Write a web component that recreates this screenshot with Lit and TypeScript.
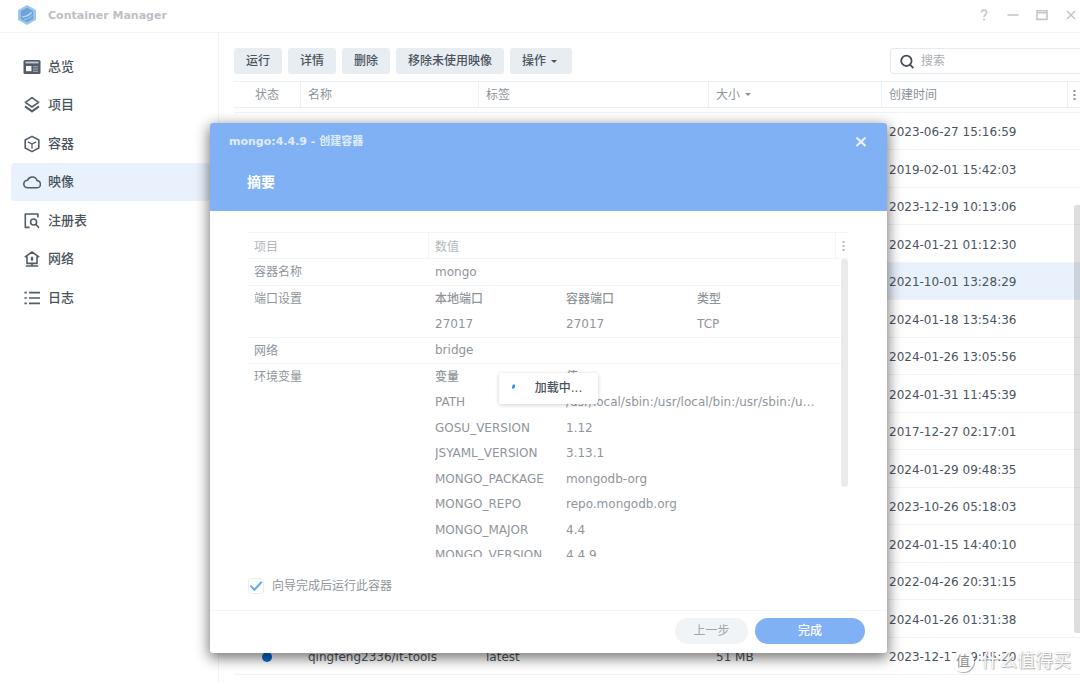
import { LitElement, html, css, svg, nothing } from "lit";
import { customElement, property, state } from "lit/decorators.js";
import { classMap } from "lit/directives/class-map.js";

const base = css`
  *, *::before, *::after { box-sizing: border-box; }
  button, input {
    font: inherit;
    color: inherit;
    margin: 0;
    padding: 0;
    border: 0;
    background: none;
  }
  svg { display: block; flex: none; }
  table { border-collapse: separate; border-spacing: 0; table-layout: fixed; width: 100%; }
  th, td { padding: 0; text-align: left; font-weight: 400; }
`;

const icons: Record<string, unknown> = {
  overview: svg`<rect x="0.5" y="2" width="17" height="14" rx="1.5" fill="#525d68"/>
    <rect x="2.5" y="3.6" width="13" height="1.8" fill="#c9ced3"/>
    <rect x="3" y="8" width="5.4" height="5.2" fill="#fff"/>
    <path d="M10 8.8h5M10 11h5M10 13.2h5" stroke="#aab1b8" stroke-width="1.1"/>`,
  project: svg`<path d="M9 1.6 15.6 6.3 9 11 2.4 6.3Z"/><path d="m2 10.400 7 5 7-5" stroke-width="2"/>`,
  container: svg`<path d="M9 1.4 15.8 5v8L9 16.6 2.2 13V5Z"/><path d="M4.8 6.8 9 9l4.2-2.2M9 9v4.8" stroke-width="1.3"/>`,
  image: svg`<path d="M4.600 14.800h9a3.600 3.600 0 0 0 .5-7.200A5 5 0 0 0 4.600 7.200a3.800 3.800 0 0 0 0 7.600Z"/>`,
  registry: svg`<path d="M6.6 15.4H2.3V2h12.6v3.6"/><circle cx="10.6" cy="10" r="3"/><path d="m12.8 12.4 3.2 3.4"/>`,
  network: svg`<path d="M1.8 7.2 9 2l7.2 5.2M4 6.4v7h10v-7M9 13.4v2.4M2.8 16h12.4"/><path d="M9 6.8v4M7.8 8.8h2.4" stroke-width="1.8"/>`,
  log: svg`<path d="M6 3.6h11M6 9h11M6 14.4h11M1.4 3.6h2.4M1.4 9h2.4M1.4 14.4h2.4" stroke-width="1.7"/>`,
};

@customElement("app-sidebar")
class AppSidebar extends LitElement {
  @state() active = "image";
  items = [
    ["overview", "总览"],
    ["project", "项目"],
    ["container", "容器"],
    ["image", "映像"],
    ["registry", "注册表"],
    ["network", "网络"],
    ["log", "日志"],
  ];
  static styles = [base, css`
    :host { display: block; padding: 15px 8px 0 11px; border-right: 1px solid #eef3f7; }
    .item {
      display: flex;
      align-items: center;
      gap: 7px;
      height: 38px;
      padding: 0 12px;
      border-radius: 4px;
      font-size: 13px;
      font-weight: 500;
      color: #4a545e;
      text-decoration: none;
    }
    .item:nth-child(even) { margin-bottom: 1px; }
    .item.active { background: #e9f1fd; }
    svg { fill: none; stroke: #525d68; stroke-width: 1.6; stroke-linejoin: round; }
    .overview svg { stroke: none; }
  `];
  render() {
    return html`<nav>${this.items.map(([id, label]) => html`
      <a href="#${id}" class=${classMap({ item: true, active: id === this.active, [id]: true })}
        @click=${() => (this.active = id)}>
        <svg width="18" height="18" viewBox="0 0 18 18">${icons[id]}</svg>${label}
      </a>`)}</nav>`;
  }
}

interface ImageRow { date: string; name?: string; tag?: string; size?: string; selected?: boolean; }

const rows: ImageRow[] = [
  { date: "2023-06-27 15:16:59" },
  { date: "2019-02-01 15:42:03" },
  { date: "2023-12-19 10:13:06" },
  { date: "2024-01-21 01:12:30" },
  { date: "2021-10-01 13:28:29", selected: true },
  { date: "2024-01-18 13:54:36" },
  { date: "2024-01-26 13:05:56" },
  { date: "2024-01-31 11:45:39" },
  { date: "2017-12-27 02:17:01" },
  { date: "2024-01-29 09:48:35" },
  { date: "2023-10-26 05:18:03" },
  { date: "2024-01-15 14:40:10" },
  { date: "2022-04-26 20:31:15" },
  { date: "2024-01-26 01:31:38" },
  { date: "2023-12-17 19:55:20", name: "qingfeng2336/it-tools", tag: "latest", size: "51 MB" },
];

@customElement("image-list")
class ImageList extends LitElement {
  static styles = [base, css`
    :host { display: block; position: relative; padding: 15px 0 0 15px; min-width: 0; overflow: hidden; }
    .toolbar { display: flex; gap: 6px; align-items: center; height: 26px; }
    .btn {
      display: flex;
      align-items: center;
      gap: 5px;
      height: 26px;
      padding: 0 12px;
      border-radius: 3px;
      background: #e8edf1;
      color: #4a545e;
      font-weight: 500;
      white-space: nowrap;
    }
    .btn.menu { padding-right: 15px; }
    .search {
      display: flex;
      align-items: center;
      gap: 6px;
      width: 190px;
      height: 26px;
      margin-left: auto;
      padding-left: 9px;
      border: 1px solid #e3ecf4;
      border-right: 0;
      border-radius: 4px 0 0 4px;
    }
    .search input { flex: 1; min-width: 0; outline: 0; }
    .search input::placeholder { color: #a9afb5; opacity: 1; }
    .caret { width: 0; height: 0; border: 3px solid transparent; border-top-color: currentColor; border-bottom: 0; }
    table { margin-top: 7px; }
    .status { width: 66px; }
    .name { width: 178px; }
    .tag { width: 230px; }
    .date { width: 186px; }
    .more { width: 13px; }
    th {
      height: 27px;
      padding: 0 0 0 7px;
      border: solid #eaf1f6;
      border-width: 1px 0 1px 1px;
      color: #8b9299;
    }
    th:first-child { border-left: 0; padding-left: 0; text-align: center; }
    th:last-child { padding: 0 0 0 5px; }
    .sort { display: flex; align-items: center; gap: 5px; }
    td { height: 37px; padding: 2px 0 0 8px; border-bottom: 1px solid #f1f4f6; color: #4a545e; white-space: nowrap; }
    tr:nth-child(odd) td { height: 38px; }
    tr.peek td { height: 5px; }
    tr.selected td { background: #e9f1fd; }
    .dot { width: 10px; height: 10px; margin: 0 auto; border-radius: 5px; background: #0a6ad0; }
    td:first-child { padding-left: 0; }
    .thumb {
      position: absolute;
      right: 0;
      top: 172px;
      bottom: 50px;
      width: 6px;
      border-radius: 3px 0 0 3px;
      background: #3c3c3c2b;
    }
  `];
  render() {
    return html`
      <div class="toolbar">
        <button class="btn">运行</button>
        <button class="btn">详情</button>
        <button class="btn">删除</button>
        <button class="btn">移除未使用映像</button>
        <button class="btn menu">操作 <span class="caret"></span></button>
        <label class="search">
          <svg width="15" height="15" viewBox="0 0 15 15" fill="none" stroke="#414b55" stroke-width="1.8">
            <circle cx="6.4" cy="6.8" r="5.2"/><path d="m9.800 10.400 3.600 3.800"/>
          </svg>
          <input type="text" placeholder="搜索" aria-label="搜索">
        </label>
      </div>
      <table>
        <colgroup>
          <col class="status"><col class="name"><col class="tag"><col><col class="date"><col class="more">
        </colgroup>
        <thead><tr>
          <th>状态</th><th>名称</th><th>标签</th>
          <th><span class="sort">大小 <span class="caret"></span></span></th>
          <th>创建时间</th>
          <th><svg width="3" height="12" viewBox="0 0 3 12" fill="#8b9299"><path d="M.5 1h2v2h-2zM.5 5h2v2h-2zM.5 9h2v2h-2z"/></svg></th>
        </tr></thead>
        <tbody>
          <tr class="peek"><td colspan="6"></td></tr>
          ${rows.map((r) => html`<tr class=${classMap({ selected: !!r.selected })}>
            <td>${r.name ? html`<div class="dot"></div>` : nothing}</td>
            <td>${r.name}</td><td>${r.tag}</td><td>${r.size}</td><td>${r.date}</td><td></td>
          </tr>`)}
        </tbody>
      </table>
      <div class="thumb"></div>`;
  }
}

@customElement("summary-dialog")
class SummaryDialog extends LitElement {
  @property({ type: Boolean }) loading = false;
  ports = [["27017", "27017", "TCP"]];
  env = [
    ["PATH", "/usr/local/sbin:/usr/local/bin:/usr/sbin:/usr/bin:/sbin:/bin"],
    ["GOSU_VERSION", "1.12"],
    ["JSYAML_VERSION", "3.13.1"],
    ["MONGO_PACKAGE", "mongodb-org"],
    ["MONGO_REPO", "repo.mongodb.org"],
    ["MONGO_MAJOR", "4.4"],
    ["MONGO_VERSION", "4.4.9"],
  ];
  static styles = [base, css`
    :host {
      display: block;
      position: relative;
      border-radius: 3px;
      background: #fff;
      box-shadow: 0 4px 14px 1px #0000008c;
      color: #8f959b;
    }
    header { height: 88px; padding: 9px 19px 0; border-radius: 3px 3px 0 0; background: #7fb1f4; color: #fff; }
    .bar { display: flex; justify-content: space-between; align-items: center; height: 20px; }
    .title { font-size: 11px; font-weight: 700; color: #e0ecfd; }
    h2 { margin: 18px 0 0 18px; font-size: 14px; line-height: 24px; font-weight: 700; }
    main { padding: 21px 38px 0 37px; }
    .head th { height: 27px; padding: 2px 0 0 7px; border: solid #f2f6f8; border-width: 1px 0 1px 1px; color: #b3b8bc; }
    .head th:nth-child(2) { padding-left: 6px; }
    .head th:first-child { border-left: 0; }
    .head th:last-child { padding: 0 0 0 6px; }
    .key { width: 181px; }
    .more { width: 14px; }
    .scroll { position: relative; height: 298px; overflow: hidden; }
    .body > tbody > tr > * { padding-left: 7px; border-bottom: 1px solid #f3f5f7; vertical-align: top; line-height: 25px; }
    .body > tbody > tr > th { padding-top: 1px; line-height: 24px; }
    .body > tbody > tr:first-child > * { padding-top: 1px; }
    .sub { width: 384px; }
    .sub th { font-weight: 500; }
    .sub tr { height: 26px; }
    .sub tr:nth-child(even) { height: 25px; }
    .sub th, .sub td { line-height: 25px; white-space: nowrap; overflow: hidden; text-overflow: ellipsis; }
    .sub .col { width: 131px; }
    .thumb { position: absolute; top: 0; right: 1px; width: 7px; height: 228px; border-radius: 4px; background: #ebebeb; }
    .run { display: flex; align-items: center; gap: 8px; height: 16px; margin: 21px 0 16px 1px; width: max-content; }
    .check { display: grid; width: 16px; height: 16px; }
    .check > * { grid-area: 1 / 1; }
    .check input { appearance: none; width: 16px; height: 16px; border: 1px solid #e6eff7; border-radius: 3px; }
    .check svg { pointer-events: none; fill: none; stroke: #66a6f5; stroke-width: 2; visibility: hidden; }
    .check input:checked + svg { visibility: visible; }
    footer { display: flex; justify-content: flex-end; gap: 7px; padding: 7px 22px 9px; border-top: 1px solid #f3f5f7; }
    .pill { height: 26px; min-width: 73px; border-radius: 13px; background: #f1f4f7; color: #a0a6ab; }
    .pill.primary { min-width: 110px; background: #7fb1f4; color: #fff; font-weight: 500; }
    .mask { position: absolute; inset: 0; display: grid; place-items: center; pointer-events: none; }
    .toast {
      display: flex;
      align-items: center;
      gap: 20px;
      height: 31px;
      padding: 0 16px 0 13px;
      border-radius: 3px;
      background: #fff;
      box-shadow: 0 1px 4px #00000030;
      color: #4a545e;
      font-weight: 500;
    }
  `];
  private subRows(head: string[], data: string[][], span: boolean) {
    return html`<table class="sub">
      <colgroup><col class="col"><col class="col"><col></colgroup>
      <tr>${head.map((h) => html`<th>${h}</th>`)}</tr>
      ${data.map((r) => html`<tr>${r.map((c, i) => html`<td colspan=${span && i === 1 ? 2 : 1}>${c}</td>`)}</tr>`)}
    </table>`;
  }
  render() {
    return html`
      <header>
        <div class="bar">
          <span class="title">mongo:4.4.9 - 创建容器</span>
          <button aria-label="关闭">
            <svg width="14" height="14" viewBox="0 0 14 14" stroke="#eaf2fe" stroke-width="2.2"><path d="m2.500 2.500 9 8.500M11.500 2.500l-9 8.500"/></svg>
          </button>
        </div>
        <h2>摘要</h2>
      </header>
      <main>
        <table class="head">
          <colgroup><col class="key"><col><col class="more"></colgroup>
          <tr><th>项目</th><th>数值</th>
            <th><svg width="3" height="12" viewBox="0 0 3 12" fill="#b3b8bc"><path d="M.5 1h2v2h-2zM.5 5h2v2h-2zM.5 9h2v2h-2z"/></svg></th></tr>
        </table>
        <div class="scroll">
          <table class="body">
            <colgroup><col class="key"><col></colgroup>
            <tbody>
              <tr><th>容器名称</th><td>mongo</td></tr>
              <tr><th>端口设置</th><td>${this.subRows(["本地端口", "容器端口", "类型"], this.ports, false)}</td></tr>
              <tr><th>网络</th><td>bridge</td></tr>
              <tr><th>环境变量</th><td>${this.subRows(["变量", "值"], this.env, true)}</td></tr>
            </tbody>
          </table>
          <div class="thumb"></div>
        </div>
        <label class="run">
          <span class="check">
            <input type="checkbox" checked>
            <svg width="16" height="16" viewBox="0 0 16 16"><path d="m2.4 7.6 4 4.2 7.4-8"/></svg>
          </span>
          向导完成后运行此容器
        </label>
      </main>
      <footer>
        <button class="pill">上一步</button>
        <button class="pill primary">完成</button>
      </footer>
      ${this.loading ? html`<div class="mask"><div class="toast" role="status">
        <svg width="3" height="10" viewBox="0 0 3 10" fill="#2f8df5"><path d="M1 1.500h2v2.500L2 5.500H0V4Z"/></svg>加载中...
      </div></div>` : nothing}`;
  }
}

@customElement("app-root")
class AppRoot extends LitElement {
  static styles = [base, css`
    :host {
      display: flex;
      flex-direction: column;
      position: relative;
      height: 100vh;
      overflow: hidden;
      background: #fff;
      font: 12px/18px "DejaVu Sans", "Noto Sans CJK SC", sans-serif;
      color: #4a545e;
    }
    .titlebar { display: flex; align-items: center; height: 33px; padding: 0 2px 2px 17px; border-bottom: 1px solid #f3f5f7; }
    h1 { flex: 1; margin: 0 0 0 11px; font-size: 11px; line-height: 18px; padding-top: 2px; font-weight: 700; color: #bcc0c5; }
    .controls { display: flex; gap: 15px; }
    .controls svg { fill: none; stroke: #c3c7cb; stroke-width: 1.6; }
    .window { flex: 1; min-height: 0; display: grid; grid-template-columns: 219px minmax(0, 1fr); }
    summary-dialog { position: absolute; top: 123px; left: 210px; right: 193px; }
    .watermark {
      position: absolute;
      right: 9px;
      bottom: 9px;
      display: flex;
      align-items: center;
      gap: 7px;
      font-size: 18px;
      line-height: 26px;
      color: #fff;
      text-shadow: 0 0 1px #a0a0a0, 1px 1px 1px #b0b0b0;
    }
    .seal {
      display: grid;
      place-items: center;
      width: 22px;
      height: 22px;
      border-radius: 11px;
      background: #fffffff2;
      box-shadow: 1px 1px 1px #00000059;
      font-size: 14px;
      line-height: 22px;
      color: #8f8f8f;
      text-shadow: none;
    }
  `];
  render() {
    return html`
      <div class="titlebar">
        <svg width="20" height="22" viewBox="0 0 20 22">
          <path d="M10 1 19 6v10l-9 5-9-5V6Z" fill="#9cc8ee"/>
          <path d="M10 3.6 16.2 7v8L10 18.4 3.8 15V7Z" fill="#6fa3d8"/>
          <path d="M5 12.200c3.600 0 6.600-1.400 9-4.400l1.200 1c-2.400 3.200-6 4.800-10 4.600Z" fill="#b4d9f4"/>
          <path d="M7 15.600c3.400-.2 6.200-1.600 8.600-4.400" fill="none" stroke="#8fc0ea" stroke-width="1.200"/>
        </svg>
        <h1>Container Manager</h1>
        <div class="controls">
          <button aria-label="帮助"><svg width="14" height="14" viewBox="0 0 14 14"><path d="M4.500 4.600C4.500 2.800 5.500 2 7 2s2.700.9 2.700 2.500C9.700 6.600 7 6.600 7 9M7 10.600v2"/></svg></button>
          <button aria-label="最小化"><svg width="14" height="14" viewBox="0 0 14 14"><path d="M1.500 7h11"/></svg></button>
          <button aria-label="最大化"><svg width="14" height="14" viewBox="0 0 14 14"><path d="M2 2.800h10v8.600H2zM2 4.800h10"/></svg></button>
          <button aria-label="关闭"><svg width="14" height="14" viewBox="0 0 14 14"><path d="m3 3 8 8M11 3l-8 8"/></svg></button>
        </div>
      </div>
      <div class="window">
        <app-sidebar></app-sidebar>
        <image-list></image-list>
      </div>
      <summary-dialog loading></summary-dialog>
      <div class="watermark"><span class="seal">值</span>什么值得买</div>`;
  }
}
